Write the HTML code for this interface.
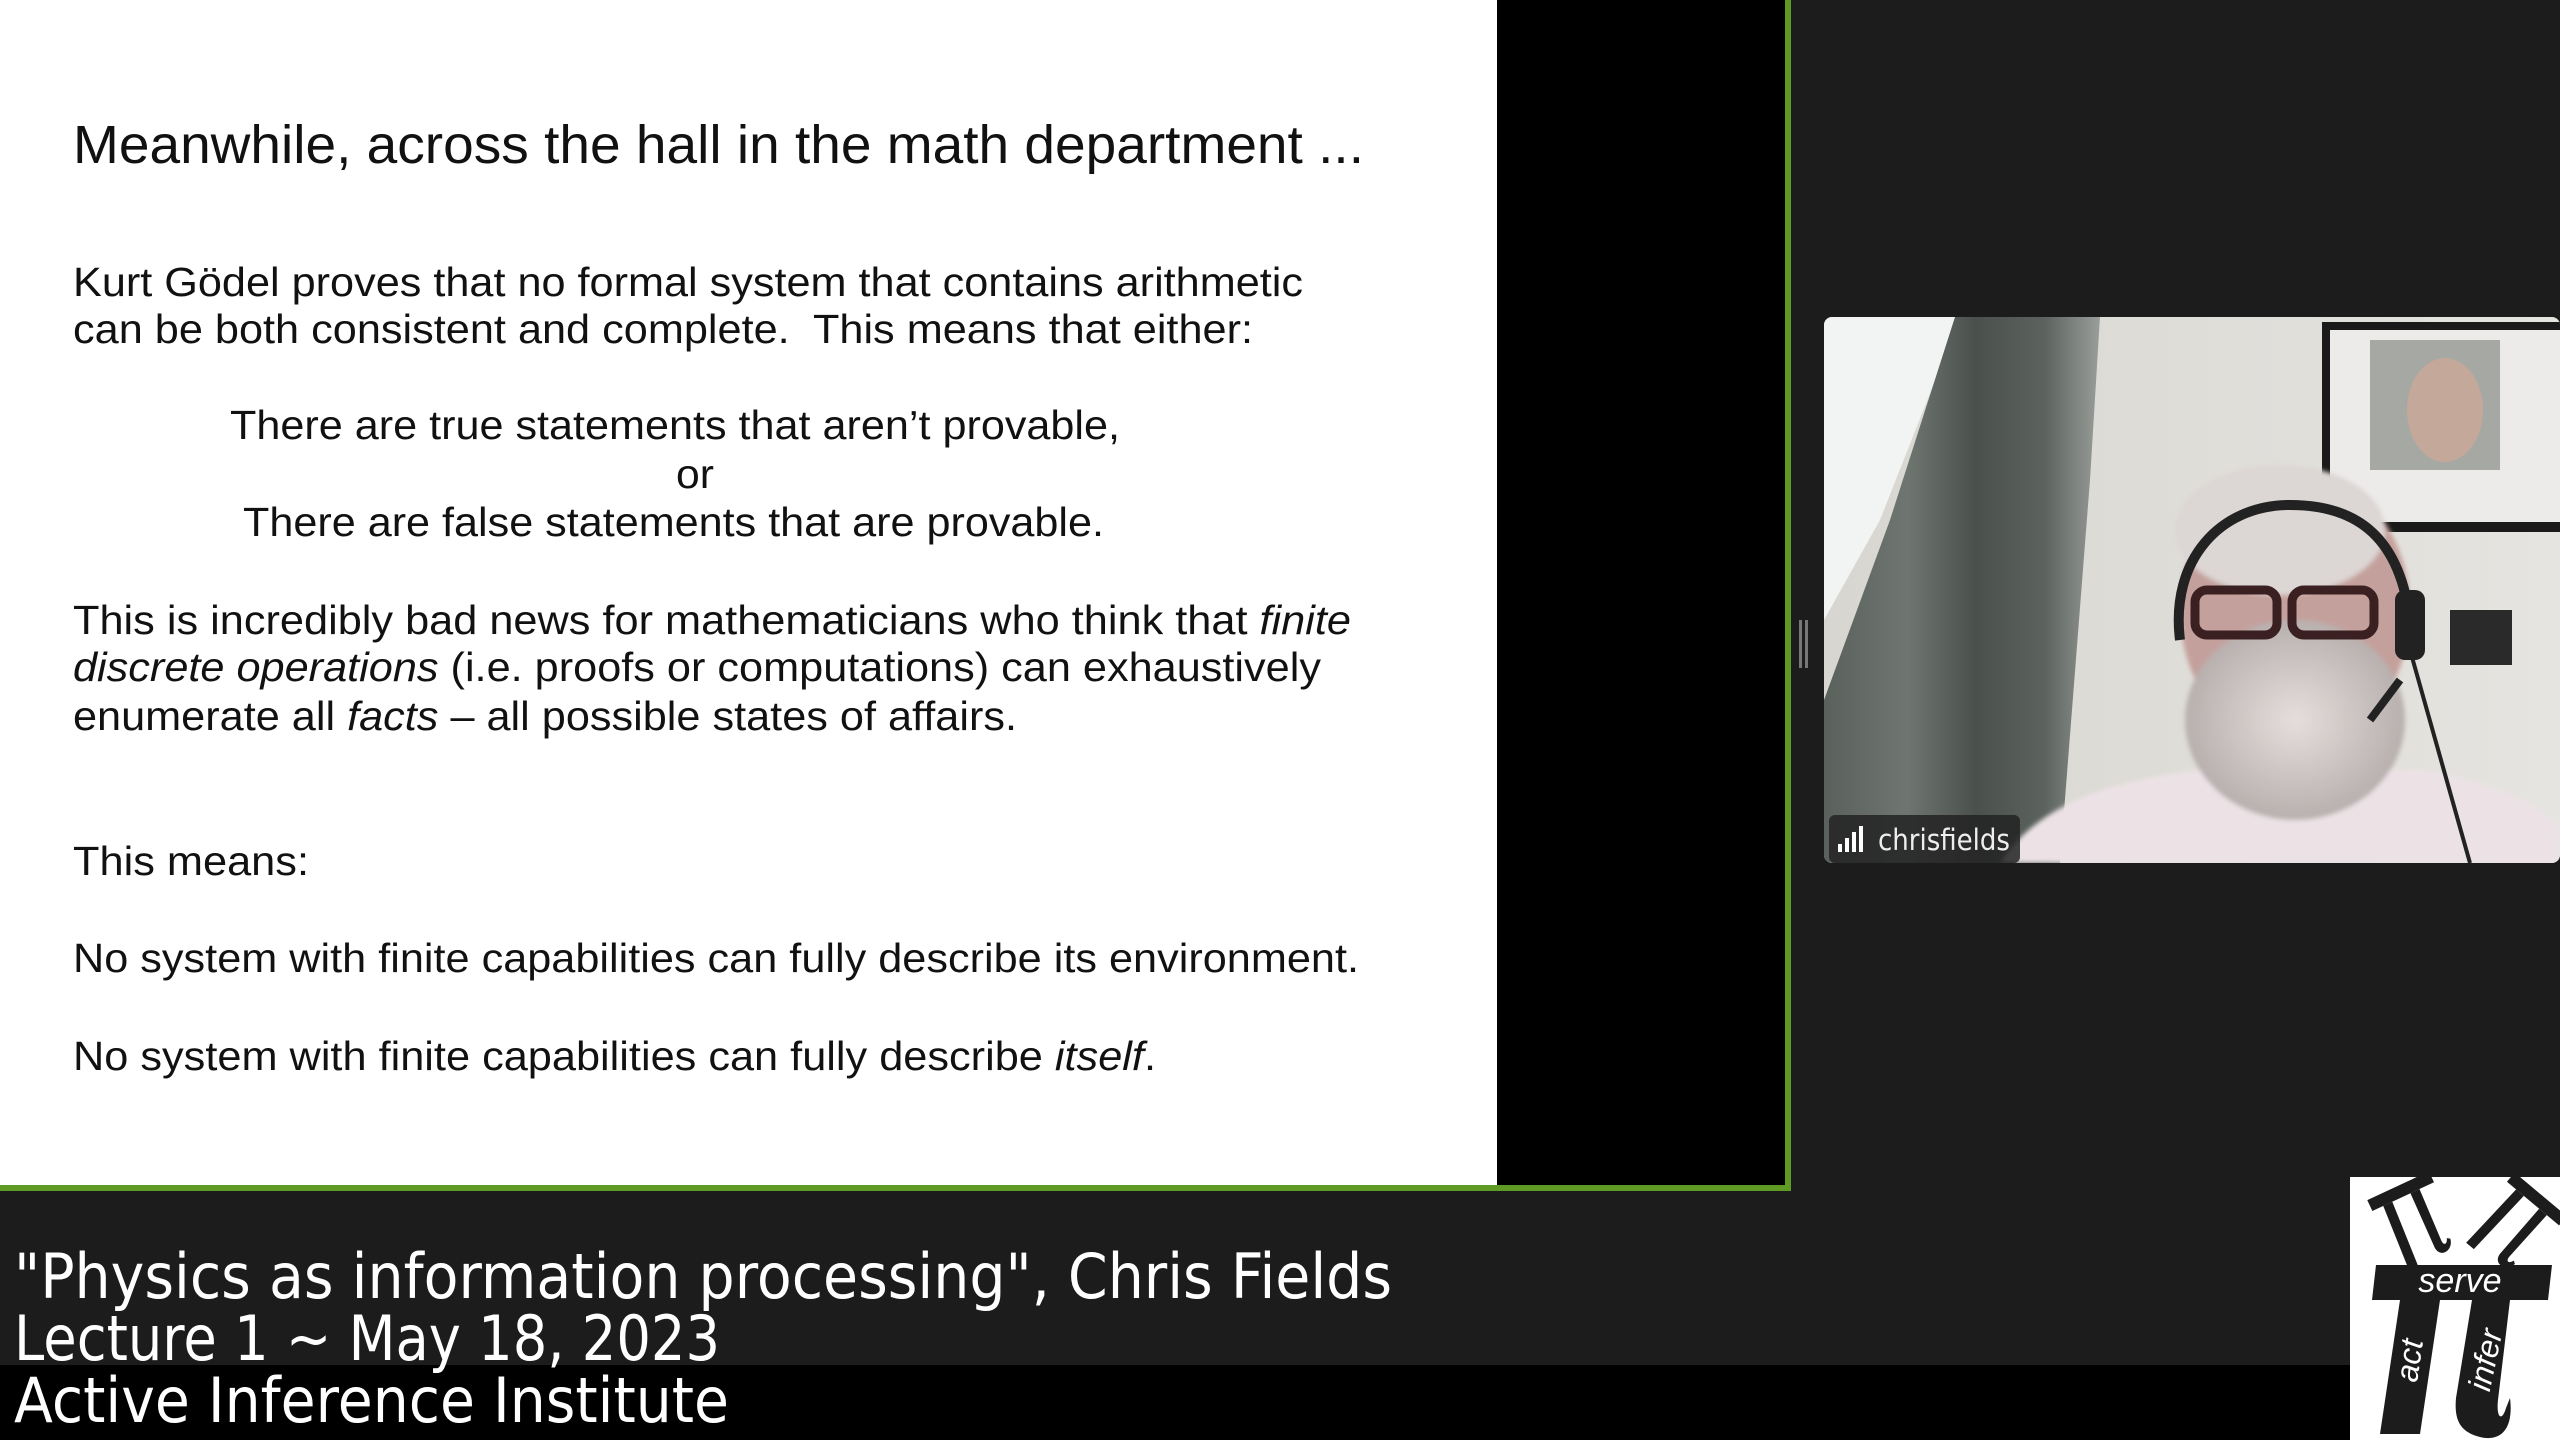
<!DOCTYPE html>
<html><head><meta charset="utf-8"><style>
html,body{margin:0;padding:0;background:#1c1c1c;width:2560px;height:1440px;overflow:hidden}
svg{display:block}
</style></head><body>
<svg width="2560" height="1440" viewBox="0 0 2560 1440" xmlns="http://www.w3.org/2000/svg">
<defs>
<linearGradient id="wall" x1="0" y1="0" x2="1" y2="0">
<stop offset="0" stop-color="#d8d6d0"/><stop offset="1" stop-color="#e6e4e0"/></linearGradient>
<linearGradient id="curt" x1="0" y1="0" x2="1" y2="0">
<stop offset="0" stop-color="#5a615d"/><stop offset="0.3" stop-color="#6f7672"/><stop offset="0.55" stop-color="#4a514d"/><stop offset="0.8" stop-color="#5c635f"/><stop offset="1" stop-color="#9a9e9a"/></linearGradient>
<radialGradient id="beard" cx="0.5" cy="0.5" r="0.5"><stop offset="0" stop-color="#e4dedc"/><stop offset="1" stop-color="#b8b0ae"/></radialGradient>
<filter id="bl"><feGaussianBlur stdDeviation="2.5"/></filter>
</defs>
<rect width="2560" height="1440" fill="#1c1c1c"/>
<rect x="0" y="1365" width="2560" height="75" fill="#000"/>
<rect x="0" y="0" width="1791" height="1191" fill="#5f9a24"/>
<rect x="0" y="0" width="1785" height="1185" fill="#000"/>
<rect x="0" y="0" width="1497" height="1185" fill="#fff"/>
<g font-family="Liberation Sans, sans-serif" fill="#111">
<text x="73" y="163" font-size="54" textLength="1291" lengthAdjust="spacingAndGlyphs">Meanwhile, across the hall in the math department ...</text>
<g font-size="41">
<text x="73" y="296" textLength="1230" lengthAdjust="spacingAndGlyphs">Kurt Gödel proves that no formal system that contains arithmetic</text>
<text x="73" y="343" textLength="1180" lengthAdjust="spacingAndGlyphs" xml:space="preserve">can be both consistent and complete.  This means that either:</text>
<text x="230" y="439" textLength="890" lengthAdjust="spacingAndGlyphs">There are true statements that aren’t provable,</text>
<text x="676" y="488" textLength="38" lengthAdjust="spacingAndGlyphs">or</text>
<text x="243" y="536" textLength="861" lengthAdjust="spacingAndGlyphs">There are false statements that are provable.</text>
<text x="73" y="634" textLength="1278" lengthAdjust="spacingAndGlyphs">This is incredibly bad news for mathematicians who think that <tspan font-style="italic">finite</tspan></text>
<text x="73" y="681" textLength="1248" lengthAdjust="spacingAndGlyphs"><tspan font-style="italic">discrete operations</tspan> (i.e. proofs or computations) can exhaustively</text>
<text x="73" y="730" textLength="944" lengthAdjust="spacingAndGlyphs">enumerate all <tspan font-style="italic">facts</tspan> – all possible states of affairs.</text>
<text x="73" y="875" textLength="236" lengthAdjust="spacingAndGlyphs">This means:</text>
<text x="73" y="972" textLength="1286" lengthAdjust="spacingAndGlyphs">No system with finite capabilities can fully describe its environment.</text>
<text x="73" y="1070" textLength="1083" lengthAdjust="spacingAndGlyphs">No system with finite capabilities can fully describe <tspan font-style="italic">itself</tspan>.</text>
</g></g>
<rect x="1799" y="620" width="3" height="48" fill="#777"/><rect x="1805" y="620" width="3" height="48" fill="#777"/>
<g>
<clipPath id="vc"><rect x="1824" y="317" width="736" height="546" rx="8"/></clipPath>
<g clip-path="url(#vc)">
<rect x="1824" y="317" width="736" height="546" fill="url(#wall)"/>
<polygon points="1824,317 1960,317 1880,520 1824,620" fill="#f2f4f4"/>
<polygon points="1955,317 2100,317 2090,480 2060,863 1824,863 1824,700 1890,520" fill="url(#curt)"/>
<rect x="2322" y="322" width="238" height="210" fill="#1a1a1a"/>
<rect x="2330" y="330" width="230" height="192" fill="#ecebea"/>
<rect x="2370" y="340" width="130" height="130" fill="#a6a8a4"/>
<ellipse cx="2445" cy="410" rx="38" ry="52" fill="#c4a89a"/>
<rect x="2450" y="610" width="62" height="55" fill="#2a2a2a"/>
<g filter="url(#bl)">
<path d="M2000 863 C2040 800 2120 780 2200 770 L2420 770 C2480 780 2540 800 2560 830 L2560 863Z" fill="#ece2e6"/>
<ellipse cx="2295" cy="610" rx="115" ry="140" fill="#c4a09c"/>
<ellipse cx="2280" cy="530" rx="105" ry="65" fill="#dcd6d4"/>
<ellipse cx="2295" cy="720" rx="110" ry="100" fill="url(#beard)"/>
</g>
<rect x="2195" y="590" width="82" height="45" rx="12" fill="none" stroke="#3a2020" stroke-width="9"/>
<rect x="2292" y="590" width="82" height="45" rx="12" fill="none" stroke="#3a2020" stroke-width="9"/>
<path d="M2180 640 C2170 560 2220 505 2290 505 C2360 505 2400 540 2410 620" fill="none" stroke="#222" stroke-width="10"/>
<rect x="2395" y="590" width="30" height="70" rx="10" fill="#222"/>
<path d="M2410 650 L2470 863" stroke="#222" stroke-width="4" fill="none"/>
<path d="M2400 680 L2370 720" stroke="#222" stroke-width="8"/>
<rect x="1829" y="815" width="191" height="48" rx="6" fill="#222" opacity="0.85"/>
<rect x="1838" y="844" width="4" height="8" fill="#fff"/><rect x="1845" y="838" width="4" height="14" fill="#fff"/><rect x="1852" y="832" width="4" height="20" fill="#fff"/><rect x="1859" y="826" width="4" height="26" fill="#fff"/>
<text x="1878" y="850" font-family="DejaVu Sans, sans-serif" font-size="29" fill="#eee" textLength="132" lengthAdjust="spacingAndGlyphs">chrisfields</text>
</g></g>
<g font-family="DejaVu Sans, sans-serif" font-size="62" fill="#fff">
<text x="14" y="1298" textLength="1378" lengthAdjust="spacingAndGlyphs">"Physics as information processing", Chris Fields</text>
<text x="14" y="1360" textLength="706" lengthAdjust="spacingAndGlyphs">Lecture 1 ~ May 18, 2023</text>
<text x="14" y="1422" textLength="715" lengthAdjust="spacingAndGlyphs">Active Inference Institute</text>
</g>
<rect x="2350" y="1177" width="210" height="263" fill="#fff"/>
<g fill="#1c1c1c">
<polygon points="2376,1265 2552,1265 2548,1300 2372,1300"/>
<polygon points="2400,1300 2440,1300 2420,1434 2380,1434"/>
<path d="M2472 1300 L2510 1300 L2498 1400 C2496 1418 2502 1422 2506 1408 L2510 1398 C2514 1430 2500 1442 2480 1437 C2460 1432 2454 1420 2456 1398Z"/>
<g transform="translate(2415,1222) rotate(-25)">
<rect x="-34" y="-40" width="68" height="12"/>
<polygon points="-22,-28 -12,-28 -16,45 -26,45"/>
<path d="M8 -28 L18 -28 L16 28 C16 34 20 34 22 28 L25 30 C23 42 8 44 7 32Z"/>
</g>
<g transform="translate(2515,1225) rotate(40)">
<rect x="-34" y="-40" width="68" height="12"/>
<polygon points="-22,-28 -12,-28 -16,45 -26,45"/>
<path d="M8 -28 L18 -28 L16 28 C16 34 20 34 22 28 L25 30 C23 42 8 44 7 32Z"/>
</g>
</g>
<g font-family="Liberation Sans, sans-serif" font-style="italic" fill="#fff">
<text x="2460" y="1292" font-size="34" text-anchor="middle">serve</text>
<text transform="translate(2420,1362) rotate(-82)" font-size="32" text-anchor="middle">act</text>
<text transform="translate(2496,1362) rotate(-78)" font-size="32" text-anchor="middle">infer</text>
</g>
</svg>
</body></html>
